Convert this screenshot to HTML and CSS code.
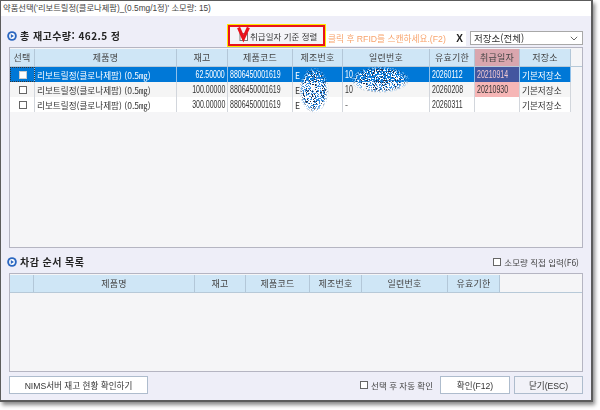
FILE: index.html
```html
<!DOCTYPE html>
<html lang="ko">
<head>
<meta charset="utf-8">
<title>약품선택</title>
<link rel="stylesheet" href="styles.css">
</head>
<body>
<svg class="defs" width="0" height="0" aria-hidden="true">
  <defs>
    <filter id="n1" x="0" y="0" width="100%" height="100%" color-interpolation-filters="sRGB">
      <feTurbulence type="fractalNoise" baseFrequency="0.75" numOctaves="2" seed="3"/>
      <feColorMatrix values="0 0 0 0 1  0 0 0 0 1  0 0 0 0 1  0 0 0 0 1" result="c"/>
      <feTurbulence type="fractalNoise" baseFrequency="0.75" numOctaves="2" seed="3"/>
      <feColorMatrix values="0 0 0 0 0  0 0 0 0 0  0 0 0 0 0  6 0 0 0 -2.8"/>
      <feComponentTransfer result="a"><feFuncA type="discrete" tableValues="0 1"/></feComponentTransfer>
      <feComposite in="c" in2="a" operator="in"/>
    </filter>
    <filter id="n2" x="0" y="0" width="100%" height="100%" color-interpolation-filters="sRGB">
      <feTurbulence type="fractalNoise" baseFrequency="0.8" numOctaves="2" seed="11"/>
      <feColorMatrix values="0 0 0 0 0.2  0 0 0 0 0.55  0 0 0 0 0.88  0 0 0 0 1" result="c"/>
      <feTurbulence type="fractalNoise" baseFrequency="0.8" numOctaves="2" seed="11"/>
      <feColorMatrix values="0 0 0 0 0  0 0 0 0 0  0 0 0 0 0  6 0 0 0 -2.5"/>
      <feComponentTransfer result="a"><feFuncA type="discrete" tableValues="0 1"/></feComponentTransfer>
      <feComposite in="c" in2="a" operator="in"/>
    </filter>
    <filter id="n3" x="0" y="0" width="100%" height="100%" color-interpolation-filters="sRGB">
      <feTurbulence type="fractalNoise" baseFrequency="0.9" numOctaves="1" seed="23"/>
      <feColorMatrix values="0 0 0 0 0.12  0 0 0 0 0.18  0 0 0 0 0.3  0 0 0 0 1" result="c"/>
      <feTurbulence type="fractalNoise" baseFrequency="0.9" numOctaves="1" seed="23"/>
      <feColorMatrix values="0 0 0 0 0  0 0 0 0 0  0 0 0 0 0  6 0 0 0 -3.3"/>
      <feComponentTransfer result="a"><feFuncA type="discrete" tableValues="0 1"/></feComponentTransfer>
      <feComposite in="c" in2="a" operator="in"/>
    </filter>
  </defs>
</svg>
<div class="window">
  <div class="titlebar">약품선택('리보트릴정(클로나제팜)_(0.5mg/1정)' 소모량: 15)</div>
  <div class="content">
    <div class="toolbar">
      <div class="section-title">
        <svg class="bullet" width="10" height="10" viewBox="0 0 10 10"><circle cx="5" cy="5" r="4.8" fill="#2a66c0"/><circle cx="5" cy="5" r="2.9" fill="#fff"/><path d="M3.8 3 7 5 3.8 7Z" fill="#2a66c0"/></svg>
        <span>총 재고수량: 462.5 정</span>
      </div>
      <div class="highlight">
        <svg class="vmark" width="13" height="17" viewBox="0 0 13 17"><rect x="3" y="6.5" width="7.5" height="7" fill="#fff" stroke="#777"/><path d="M1.6 0.5 6.4 11.5 11.4 0.5" fill="none" stroke="#e8131c" stroke-width="3.2"/></svg>
        <span>취급일자 기준 정렬</span>
      </div>
      <div class="rfid">
        <span class="rfid-text">클릭 후 RFID를 스캔하세요.(F2)</span>
        <span class="rfid-x">X</span>
      </div>
      <div class="combo">
        <span>저장소(전체)</span>
        <svg width="8" height="5" viewBox="0 0 8 5"><path d="M.8.8 4 4 7.2.8" fill="none" stroke="#666"/></svg>
      </div>
    </div>

    <div class="grid grid-main">
      <div class="row head cols-main">
        <div class="cell">선택</div><div class="cell">제품명</div><div class="cell">재고</div><div class="cell">제품코드</div><div class="cell">제조번호</div><div class="cell">일련번호</div><div class="cell">유효기한</div><div class="cell head-pink">취급일자</div><div class="cell">저장소</div>
      </div>
      <div class="row cols-main selected">
        <div class="cell check focus"><span class="box"></span></div><div class="cell left">리보트릴정(클로나제팜) (0.5㎎)</div><div class="cell right"><span class="num-r">62.50000</span></div><div class="cell left"><span class="num">8806450001619</span></div><div class="cell left">E</div><div class="cell left"><span class="num">10</span></div><div class="cell left"><span class="num">20260112</span></div><div class="cell left pink-sel"><span class="num">20210914</span></div><div class="cell left">기본저장소</div>
      </div>
      <div class="row cols-main alt">
        <div class="cell check"><span class="box"></span></div><div class="cell left">리보트릴정(클로나제팜) (0.5㎎)</div><div class="cell right"><span class="num-r">100.00000</span></div><div class="cell left"><span class="num">8806450001619</span></div><div class="cell left">E</div><div class="cell left"><span class="num">10</span></div><div class="cell left"><span class="num">20260208</span></div><div class="cell left pink"><span class="num">20210930</span></div><div class="cell left">기본저장소</div>
      </div>
      <div class="row cols-main plain">
        <div class="cell check"><span class="box"></span></div><div class="cell left">리보트릴정(클로나제팜) (0.5㎎)</div><div class="cell right"><span class="num-r">300.00000</span></div><div class="cell left"><span class="num">8806450001619</span></div><div class="cell left">E</div><div class="cell left">-</div><div class="cell left"><span class="num">20260311</span></div><div class="cell left"></div><div class="cell left">기본저장소</div>
      </div>
      <svg class="blur-a" width="30" height="46" viewBox="0 0 30 46"><rect width="30" height="46" filter="url(#n2)"/><rect width="30" height="46" filter="url(#n1)"/><rect width="30" height="46" filter="url(#n3)"/></svg>
      <svg class="blur-b" width="60" height="27" viewBox="0 0 60 27"><rect width="60" height="27" filter="url(#n2)"/><rect width="60" height="27" filter="url(#n1)"/><rect width="60" height="27" filter="url(#n3)"/></svg>
    </div>

    <div class="section-row">
      <div class="section-title">
        <svg class="bullet" width="10" height="10" viewBox="0 0 10 10"><circle cx="5" cy="5" r="4.8" fill="#2a66c0"/><circle cx="5" cy="5" r="2.9" fill="#fff"/><path d="M3.8 3 7 5 3.8 7Z" fill="#2a66c0"/></svg>
        <span>차감 순서 목록</span>
      </div>
      <label class="checkline"><span class="box"></span>소모량 직접 입력(F6)</label>
    </div>

    <div class="grid grid-sub">
      <div class="row head cols-sub">
        <div class="cell"></div><div class="cell">제품명</div><div class="cell">재고</div><div class="cell">제품코드</div><div class="cell">제조번호</div><div class="cell">일련번호</div><div class="cell">유효기한</div>
      </div>
    </div>

    <div class="footer">
      <button class="btn btn-nims">NIMS서버 재고 현황 확인하기</button>
      <label class="checkline auto"><span class="box"></span>선택 후 자동 확인</label>
      <button class="btn btn-ok">확인(F12)</button>
      <button class="btn btn-close">닫기(ESC)</button>
    </div>
  </div>
</div>
</body>
</html>
```
FILE: styles.css
```css
* { box-sizing: border-box; }
html, body { margin: 0; padding: 0; background: #fff; }
body {
  width: 600px;
  height: 410px;
  overflow: hidden;
  font-family: "Liberation Sans", "Noto Sans CJK KR", sans-serif;
  font-size: 9px;
  color: #333;
}
.defs { display: block; height: 0; }
.window {
  width: 593px;
  height: 402px;
  border: 1px solid #5c5c5c;
  border-width: 1px 2px 2px 1px;
  background: #eeeef8;
  box-shadow: 2px 3px 4px #8a8a8a;
  display: flex;
  flex-direction: column;
  filter: blur(0.35px);
}
.titlebar {
  height: 15px;
  flex: none;
  background: #fff;
  padding-left: 2px;
  font-size: 8.3px;
  line-height: 15px;
  color: #444;
  white-space: nowrap;
}
.content {
  flex: 1;
  display: flex;
  flex-direction: column;
  padding: 8px 8px 0 8px;
}
.toolbar {
  display: flex;
  align-items: center;
  height: 23px;
  flex: none;
}
.section-title {
  display: flex;
  align-items: center;
  gap: 3px;
  font-family: "Noto Sans CJK KR", sans-serif;
  font-size: 10px;
  font-weight: 700;
  letter-spacing: 0.45px;
  color: #222;
  white-space: nowrap;
  margin-left: -2px;
}
.toolbar .section-title { width: 221px; }
.bullet { flex: none; }
.highlight {
  width: 97px;
  height: 21px;
  flex: none;
  margin-right: 1px;
  border: 2px solid #e8131c;
  outline: 1px solid #ffe800;
  background: #f4f4f8;
  display: flex;
  align-items: center;
  gap: 0;
  padding-left: 7px;
  font-family: "Noto Sans CJK KR", sans-serif;
  font-size: 8.5px;
  color: #333;
  white-space: nowrap;
}
.vmark { flex: none; }
.rfid {
  width: 140px;
  height: 15px;
  flex: none;
  display: flex;
  align-items: center;
  justify-content: space-between;
  background: #fff;
  padding: 0 3px 0 2px;
  margin-top: 5px;
}
.rfid-text { color: #f8a36c; font-size: 8.7px; white-space: nowrap; }
.rfid-x { font-weight: 700; font-size: 10px; color: #222; }
.combo {
  width: 113px;
  height: 14px;
  flex: none;
  margin: 5px 0 0 4px;
  background: #fff;
  border: 1px solid #a8a8a8;
  display: flex;
  align-items: center;
  justify-content: space-between;
  padding: 0 4px 0 3px;
  color: #333;
  font-family: "Noto Sans CJK KR", sans-serif;
  font-size: 9.5px;
}
.grid {
  position: relative;
  background: #f5f5f7;
  border: 1px solid #b5b5c2;
  padding-top: 1px;
  flex: none;
}
.grid-main { height: 201px; width: 574px; }
.grid-sub { height: 99px; width: 574px; }
.row { display: grid; height: 15px; }
.row.head { height: 18px; }
.cols-main { grid-template-columns: 25px 142px 51px 65px 50px 87px 45px 45px 51px; }
.cols-sub { grid-template-columns: 24px 161px 51px 64px 52px 86px 52px; }
.cell {
  display: flex;
  align-items: center;
  justify-content: center;
  border-right: 1px solid #d2d6dc;
  font-family: "Noto Sans CJK KR", sans-serif;
  font-size: 8.6px;
  white-space: nowrap;
  overflow: hidden;
  color: #333;
}
.num, .num-r {
  display: block;
  font-family: "Liberation Sans", sans-serif;
  font-size: 10px;
  transform: scaleX(0.7);
  transform-origin: left center;
}
.num-r { transform-origin: right center; }
.head { border-bottom: 1px solid #b7c9d8; }
.head .cell {
  background: #cfe6f6;
  border-right: 1px solid #b3c7d8;
  color: #444;
  font-size: 9px;
  letter-spacing: 0.2px;
}
.head .cell.head-pink { background: #d9a6ae; }
.left { justify-content: flex-start; padding-left: 2px; }
.right { justify-content: flex-end; padding-right: 2px; }
.check { padding-left: 1px; }
.alt .cell { background: #f5f5f5; }
.plain .cell { background: #fff; }
.selected .cell { background: #0078d7; color: #fff; border-right-color: #8fc0ea; }
.selected .cell.pink-sel { background: #43569f; color: #f0c8d0; }
.alt .cell.pink { background: #f6b6b6; color: #333; }
.focus { outline: 1px dotted #333; outline-offset: -1px; }
.box {
  display: block;
  width: 8px;
  height: 8px;
  background: #fff;
  border: 1px solid #666;
  flex: none;
}
.selected .box { border-color: #ccc; }
.blur-a {
  position: absolute;
  left: 289px;
  top: 19px;
  -webkit-mask-image: radial-gradient(ellipse closest-side, #000 72%, transparent 100%);
  mask-image: radial-gradient(ellipse closest-side, #000 72%, transparent 100%);
}
.blur-b {
  position: absolute;
  left: 340px;
  top: 18px;
  -webkit-mask-image: radial-gradient(ellipse closest-side, #000 72%, transparent 100%);
  mask-image: radial-gradient(ellipse closest-side, #000 72%, transparent 100%);
}
.section-row {
  height: 25px;
  flex: none;
  display: flex;
  align-items: center;
  justify-content: space-between;
  padding: 2px 4px 0 0;
}
.checkline {
  display: flex;
  align-items: center;
  gap: 3px;
  font-family: "Noto Sans CJK KR", sans-serif;
  font-size: 8.5px;
  color: #444;
  white-space: nowrap;
}
.footer {
  display: flex;
  align-items: center;
  margin-top: 4px;
  height: 18px;
  flex: none;
}
.btn {
  height: 18px;
  flex: none;
  background: #fff;
  border: 1px solid #aebccd;
  font-family: "Liberation Sans", "Noto Sans CJK KR", sans-serif;
  font-size: 8.6px;
  color: #333;
  padding: 0;
}
.btn-nims { width: 139px; }
.auto { margin-left: auto; margin-right: 7px; }
.btn-ok { width: 70px; }
.btn-close { width: 69px; margin-left: 4px; background: #f2f2f8; }
```
